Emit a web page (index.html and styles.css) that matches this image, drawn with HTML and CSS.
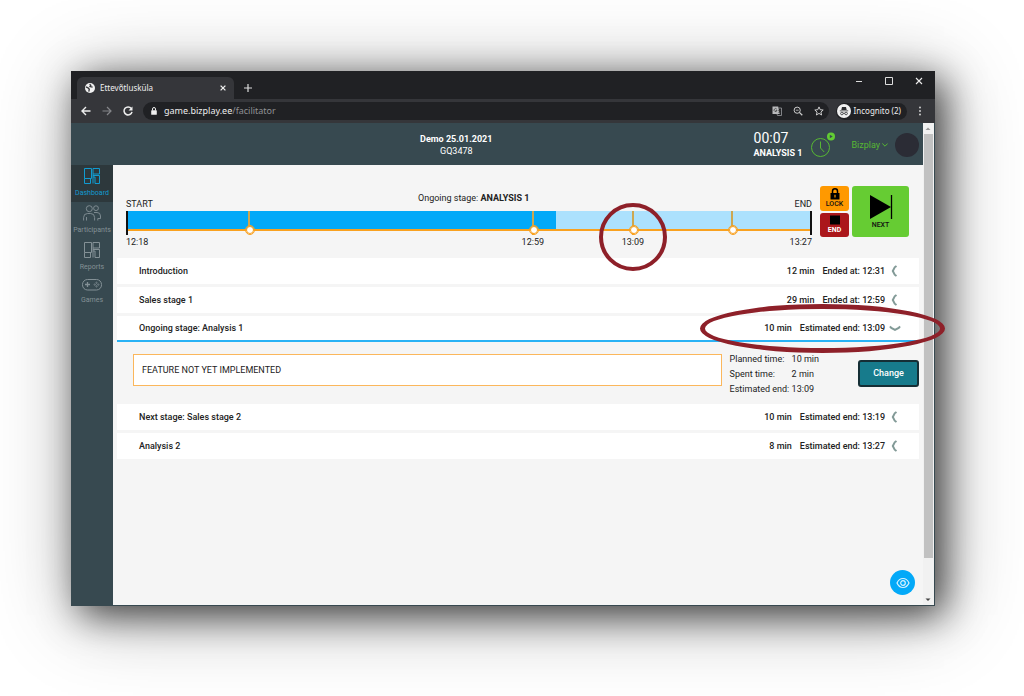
FILE: index.html
```html
<!DOCTYPE html>
<html lang="en">
<head>
<meta charset="utf-8">
<title>Ettevõtlusküla</title>
<link rel="stylesheet" href="styles.css">
</head>
<body>
<div class="window">
  <div class="tabstrip">
    <div class="tab">
      <svg class="i10" viewBox="0 0 10 10"><circle cx="5" cy="5" r="5" fill="#f1f1f1"/><path d="M1 3.800 3 4.800 4.300 6.200 3.800 8.600M4.600 1.200 5.800 2.400 5 3.600 7.600 4.200" fill="none" stroke="#35363a" stroke-width="1.300"/></svg>
      <span class="tab-title">Ettevõtlusküla</span>
      <button class="ghost" aria-label="Close tab"><svg class="i6" viewBox="0 0 6 6"><path d="M.6.6l4.800 4.800M5.400.6.6 5.400" stroke="#eee" stroke-width="1.300"/></svg></button>
    </div>
    <button class="ghost newtab" aria-label="New tab"><svg class="i8" viewBox="0 0 8 8"><path d="M4 0v8M0 4h8" stroke="#ddd" stroke-width="1.200"/></svg></button>
    <div class="win-controls">
      <button class="ghost" aria-label="Minimize"><svg class="i8" viewBox="0 0 8 8"><path d="M1 4.500h6" stroke="#ddd"/></svg></button>
      <button class="ghost" aria-label="Maximize"><svg class="i8" viewBox="0 0 8 8"><path d="M.5.500h7v7h-7z" fill="none" stroke="#ddd"/></svg></button>
      <button class="ghost" aria-label="Close"><svg class="i8" viewBox="0 0 8 8"><path d="M1 1l6 6M7 1 1 7" stroke="#eee" stroke-width="1.100"/></svg></button>
    </div>
  </div>
  <div class="toolbar">
    <button class="ghost" aria-label="Back"><svg class="i10" viewBox="0 0 10 10"><path d="M9.500 5H1.200M5 1 1 5l4 4" fill="none" stroke="#eee" stroke-width="1.400"/></svg></button>
    <button class="ghost" aria-label="Forward"><svg class="i10" viewBox="0 0 10 10"><path d="M.5 5h8.300M5 1l4 4-4 4" fill="none" stroke="#85868a" stroke-width="1.200"/></svg></button>
    <button class="ghost" aria-label="Reload"><svg class="i10" viewBox="0 0 10 10"><path d="M8.300 2.500A4 4 0 1 0 9 5.800" fill="none" stroke="#eee" stroke-width="1.500"/><path d="M9.500.5v4h-4z" fill="#eee"/></svg></button>
    <div class="address">
      <svg class="i8" viewBox="0 0 8 8"><rect x="1.200" y="3.200" width="5.600" height="4.600" rx=".6" fill="#eee"/><path d="M2.500 3.500V2a1.500 1.500 0 0 1 3 0v1.500" fill="none" stroke="#eee"/></svg>
      <span class="url">game.bizplay.ee<span class="path">/facilitator</span></span>
      <button class="ghost" aria-label="Translate"><svg class="i10" viewBox="0 0 10 10"><path d="M.5.500h5.700l1.500 7.500H.5z" fill="#b9babc"/><path d="M6.500 2h3v7.500h-4L5 8" fill="none" stroke="#9b9c9f" stroke-width=".8"/><path d="M4.800 3.200a1.500 1.500 0 1 0 .2 1.300H3.600M6.300 4.500h2.600M7.600 4v.8L6.800 7M7 5.300l1.600 1.500" fill="none" stroke="#333" stroke-width=".7"/></svg></button>
      <button class="ghost" aria-label="Zoom"><svg class="i10" viewBox="0 0 10 10"><circle cx="4.200" cy="4.200" r="3.100" fill="none" stroke="#ccc"/><path d="M6.400 6.400 9.300 9.300" stroke="#ccc" stroke-width="1.300"/><path d="M2.800 4.200h2.800" stroke="#ccc" stroke-width=".8"/></svg></button>
      <button class="ghost" aria-label="Bookmark"><svg class="i10" viewBox="0 0 10 10"><path d="M5 .9l1.200 2.800 3 .3-2.300 2 .7 3L5 7.400 2.400 9l.7-3L.8 4l3-.3z" fill="none" stroke="#ddd" stroke-width=".9"/></svg></button>
    </div>
    <div class="incognito">
      <svg class="i14" viewBox="0 0 14 14"><circle cx="7" cy="7" r="7" fill="#f1f1f1"/><path d="M4.300 6 5 3h4l.7 3zM2.800 6.400h8.400v.9H2.800z" fill="#2b2c2f"/><g fill="none" stroke="#2b2c2f" stroke-width=".8"><circle cx="4.900" cy="9.500" r="1.300"/><circle cx="9.100" cy="9.500" r="1.300"/><path d="M6.200 9.300h1.600"/></g></svg>
      <span>Incognito (2)</span>
    </div>
    <button class="ghost" aria-label="Menu"><svg class="i10" viewBox="0 0 10 10"><g fill="#ddd"><circle cx="5" cy="1.500" r=".9"/><circle cx="5" cy="5" r=".9"/><circle cx="5" cy="8.500" r=".9"/></g></svg></button>
  </div>

  <div class="viewport">
    <div class="app">
      <header class="header">
        <div class="event"><strong>Demo 25.01.2021</strong><span>GQ3478</span></div>
        <div class="session">
          <div class="clock"><span class="clock-time">00:07</span><strong>ANALYSIS 1</strong></div>
          <svg class="clock-icon" viewBox="0 0 26 26"><g fill="none" stroke="#57b833"><circle cx="10.500" cy="15.500" r="9"/><path d="M10.500 9.500V16l3.700 4"/></g><circle cx="21" cy="4.500" r="4" fill="#62cc33"/><path d="M19.800 2.800v3.400l2.900-1.700z" fill="#374950"/></svg>
          <button class="account">Bizplay <svg class="i6" viewBox="0 0 6 6"><path d="M.3 1.500 3 4.200l2.700-2.700" fill="none" stroke="#57b833"/></svg></button>
          <span class="avatar"></span>
        </div>
      </header>
      <div class="body">
        <nav class="sidebar">
          <a href="#" class="nav-item active"><svg class="i16" viewBox="0 0 16 16"><path d="M.5.500h7v10h-7zM.5 10.500v5h6v-5M9 .5h6.500V6H9zM9 6v9.500M9 7.500h6.500v8H11V9H9" fill="none" stroke="currentColor"/></svg>Dashboard</a>
          <a href="#" class="nav-item"><svg class="i18" viewBox="0 0 18 16"><g fill="none" stroke="currentColor" stroke-width=".9"><circle cx="6.300" cy="3.700" r="3"/><circle cx="13" cy="3.200" r="2.400"/><path d="M.6 15.500v-3q0-4 4-4h3q4 0 4 4v3M3.500 12v3.500M11 7.500h3q3.500 0 3.500 3.500v2.500h-2.700v2"/></g></svg>Participants</a>
          <a href="#" class="nav-item"><svg class="i16" viewBox="0 0 16 16"><path d="M.5.500h7v10h-7zM.5 10.500v5h6v-5M9 .5h6.500V6H9zM9 6v9.500M9 7.500h6.500v8H11V9H9" fill="none" stroke="currentColor"/></svg>Reports</a>
          <a href="#" class="nav-item short"><svg class="i20" viewBox="0 0 20 12"><rect x=".5" y=".5" width="19" height="10.500" rx="5" fill="none" stroke="currentColor"/><path d="M5.500 3v5M3 5.500h5" stroke="currentColor" stroke-width="1.300"/><g fill="none" stroke="currentColor" stroke-width=".7"><circle cx="14.500" cy="3.800" r=".7"/><circle cx="14.500" cy="7.400" r=".7"/><circle cx="12.700" cy="5.600" r=".7"/><circle cx="16.300" cy="5.600" r=".7"/></g></svg>Games</a>
        </nav>
        <main class="main">
          <section class="overview">
            <div class="timeline">
              <div class="captions"><span>START</span><span class="current">Ongoing stage: <strong>ANALYSIS 1</strong></span><span>END</span></div>
              <div class="track">
                <div class="progress" style="width:62.700%"></div>
                <span class="mark" style="left:17.900%"></span>
                <span class="mark tick" style="left:59.300%"><span class="mark-time">12:59</span></span>
                <span class="mark tick" style="left:73.900%"><span class="mark-time">13:09</span><span class="highlight-circle"></span></span>
                <span class="mark" style="left:88.400%"></span>
              </div>
              <div class="limits"><span>12:18</span><span>13:27</span></div>
            </div>
            <div class="controls">
              <div class="stack">
                <button class="action lock"><svg class="lock-icon" viewBox="0 0 12 12"><path d="M1.500 5h9v6.500h-9z"/><path d="M3.500 5V3.300a2.500 2.500 0 0 1 5 0V5" fill="none" stroke="#000" stroke-width="1.500"/><path d="M6 6.800v2.800" stroke="#ff9900" stroke-width="1.200"/></svg>LOCK</button>
                <button class="action end"><svg class="end-icon" viewBox="0 0 10 10"><path d="M0 .5h10v9H0z"/></svg>END</button>
              </div>
              <button class="action next"><svg class="next-icon" viewBox="0 0 24 26"><path d="M1 1 22 13 1 25z"/><path d="M22.500 1v24" stroke="#000" stroke-width="1.300"/></svg>NEXT</button>
            </div>
          </section>
          <section class="stages">
            <button class="stage"><span>Introduction</span><span class="length">12 min</span><span>Ended at: 12:31</span><svg class="chev" viewBox="0 0 12 12"><path d="M7.500 1 5.700 2.300 3.800 6l1.900 3.700L7.500 11" /></svg></button>
            <button class="stage"><span>Sales stage 1</span><span class="length">29 min</span><span>Ended at: 12:59</span><svg class="chev" viewBox="0 0 12 12"><path d="M7.500 1 5.700 2.300 3.800 6l1.900 3.700L7.500 11" /></svg></button>
            <div class="open-stage">
              <button class="stage open" aria-expanded="true"><span>Ongoing stage: Analysis 1</span><span class="length">10 min</span><span>Estimated end: 13:09</span><svg class="chev" viewBox="0 0 12 12"><path d="M1 4.300 2.300 6 6 7.900 9.700 6 11 4.300"/></svg></button>
              <span class="highlight-ellipse"></span>
              <div class="detail">
                <div class="notice">FEATURE NOT YET IMPLEMENTED</div>
                <dl class="times"><dt>Planned time:</dt><dd>10 min</dd><dt>Spent time:</dt><dd>2 min</dd><dt>Estimated end:</dt><dd>13:09</dd></dl>
                <button class="change">Change</button>
              </div>
            </div>
            <button class="stage"><span>Next stage: Sales stage 2</span><span class="length">10 min</span><span>Estimated end: 13:19</span><svg class="chev" viewBox="0 0 12 12"><path d="M7.500 1 5.700 2.300 3.800 6l1.900 3.700L7.500 11" /></svg></button>
            <button class="stage"><span>Analysis 2</span><span class="length">8 min</span><span>Estimated end: 13:27</span><svg class="chev" viewBox="0 0 12 12"><path d="M7.500 1 5.700 2.300 3.800 6l1.900 3.700L7.500 11" /></svg></button>
          </section>
          <button class="watch" aria-label="Watch"><svg class="i14" viewBox="0 0 14 14"><g fill="none" stroke="#d9f2ff" stroke-width="1.200"><path d="M1 7q2-4.500 6-4.500T13 7q-2 4.500-6 4.500T1 7z"/><circle cx="7" cy="7" r="2.300"/></g></svg></button>
        </main>
      </div>
    </div>
    <div class="scrollbar">
      <svg class="arrow" viewBox="0 0 10 10"><path d="M2.500 6.500 5 4l2.500 2.500z" fill="#999"/></svg>
      <span class="thumb"></span>
      <svg class="arrow" viewBox="0 0 10 10"><path d="M2.500 4 5 6.500 7.500 4z" fill="#444"/></svg>
    </div>
  </div>
</div>
</body>
</html>
```
FILE: styles.css
```css
* { box-sizing: border-box; }
body { margin: 0; min-height: 100vh; padding: 71px 89px 90px 71px; display: flex; background: #fff; font: 9px/15px Roboto, sans-serif; color: #222; }
button { font: inherit; color: inherit; border: 0; padding: 0; background: none; cursor: pointer; }
svg { display: block; flex: none; }
.ghost { display: flex; }
.i6 { width: 6px; height: 6px; }
.i8 { width: 8px; height: 8px; }
.i10 { width: 10px; height: 10px; }
.i14 { width: 14px; height: 14px; }
.i16 { width: 16px; height: 16px; }
.i18 { width: 18px; height: 16px; }
.i20 { width: 20px; height: 12px; }

.window { flex: 1; min-width: 0; display: flex; flex-direction: column; background: #35363a; box-shadow: 9px 9px 36px rgba(0,0,0,.7), 6px 8px 80px rgba(0,0,0,.3); }
.tabstrip { display: flex; height: 28px; padding-left: 6px; background: #202124; color: #eee; font: 8px/12px "Noto Sans", sans-serif; }
.tab { display: flex; align-items: center; gap: 5px; width: 157px; margin-top: 6px; padding: 0 8px; border-radius: 6px 6px 0 0; background: #35363a; }
.tab-title { flex: 1; }
.newtab { align-items: center; margin: 6px 0 0 10px; }
.win-controls { display: flex; gap: 22px; margin-left: auto; padding: 6px 12px 0 0; }
.toolbar { display: flex; align-items: center; gap: 11px; height: 24px; padding: 0 10px; background: #35363a; color: #eee; font: 8px/12px "Noto Sans", sans-serif; }
.address { flex: 1; display: flex; align-items: center; gap: 11px; height: 18px; margin-left: -1px; padding: 0 5px 0 7px; border-radius: 9px; background: #202124; }
.url { flex: 1; font-size: 9px; margin-left: -5px; }
.path { color: #909194; }
.incognito { display: flex; align-items: center; gap: 3px; height: 17px; padding: 0 6px 0 1px; margin-left: -4px; margin-right: -3px; border-radius: 9px; background: #202124; }

.viewport { flex: 1; display: flex; border: solid #374950; border-width: 0 1px 1px 0; }
.app { flex: 1; min-width: 0; display: flex; flex-direction: column; background: #f5f5f5; }
.header { display: flex; align-items: center; height: 42px; padding: 2px 4px 0 88px; background: #374950; color: #fff; line-height: 12px; }
.event { flex: 1; display: flex; flex-direction: column; align-items: center; }
.session { display: flex; align-items: center; }
.clock { display: flex; flex-direction: column; line-height: 14px; }
.clock-time { font-size: 14px; line-height: 16px; }
.clock-icon { width: 26px; height: 26px; margin: 0 15px 0 8px; }
.account { display: flex; align-items: center; gap: 2px; color: #57b833; }
.avatar { width: 24px; height: 24px; margin-left: 7px; border-radius: 50%; background: #2b2c35; }
.body { flex: 1; display: flex; }
.sidebar { width: 42px; background: #374950; }
.nav-item { display: flex; flex-direction: column; align-items: center; justify-content: space-between; height: 37px; padding: 3px 0 4px; color: #849196; font-size: 7px; line-height: 10px; text-decoration: none; }
.nav-item.active { background: #2d383c; color: #119bd0; }
.nav-item.short { height: 33px; }

.main { flex: 1; min-width: 0; display: flex; flex-direction: column; padding: 21px 4px 10px; }
.overview { display: flex; gap: 8px; padding: 0 10px 0 9px; }
.timeline { flex: 1; padding-top: 5px; }
.captions { display: flex; justify-content: space-between; align-items: flex-end; height: 20px; line-height: 13px; }
.captions .current { align-self: flex-start; line-height: 15px; }
.track { position: relative; height: 20px; background: #ace1fd; border-bottom: 2px solid #f9a11f; }
.track::before, .track::after { content: ""; position: absolute; top: 0; left: 0; width: 2px; height: 24px; background: #111; }
.track::after { left: auto; right: 0; }
.progress { height: 100%; background: #03a9f8; }
.mark { position: absolute; top: 0; width: 2px; height: 18px; margin-left: -1px; background: #cda751; }
.mark::before { content: ""; position: absolute; top: 15px; left: -2px; width: 6px; height: 6px; border: 1px solid #f9a11f; outline: 1px solid #f9a11f; border-radius: 50%; background: #fff; }
.tick::after { content: ""; position: absolute; top: 22px; left: 0; width: 2px; height: 2px; background: #f9a11f; }
.mark-time { position: absolute; top: 24px; left: 1px; transform: translateX(-50%); }
.limits { display: flex; justify-content: space-between; padding-top: 4px; }
.highlight-circle { position: absolute; z-index: 2; top: -8px; left: -33px; width: 68px; height: 68px; border: 4px solid #8e2029; border-radius: 50%; }
.controls { display: flex; gap: 3px; height: 51px; }
.stack { display: flex; flex-direction: column; gap: 2px; width: 29px; }
.action { display: flex; flex-direction: column; align-items: center; justify-content: center; border-radius: 3px; color: #111; font-size: 7px; font-weight: 500; line-height: 8px; }
.stack .action { flex: 1; }
.lock { background: #ff9900; }
.stack .end { background: #ab171b; color: #fff; font-weight: 700; }
.end-icon { width: 10px; height: 10px; margin-bottom: 1px; }
.end-icon path { fill: #000; }
.lock-icon { width: 12px; height: 12px; }
.next { width: 57px; background: #66cc33; }
.next-icon { width: 24px; height: 26px; margin-bottom: 1px; }

.stages { display: flex; flex-direction: column; gap: 3px; margin-top: 8px; font-weight: 500; }
.stage { display: flex; align-items: center; width: 100%; height: 26px; padding: 0 18px 0 22px; background: #fff; color: #222; text-align: left; }
.stage.open { border-bottom: 2px solid #29b2f5; }
.length { margin: 0 8px 0 auto; }
.chev { width: 12px; height: 12px; margin-left: 4px; fill: none; stroke: #829a97; stroke-width: 2; }
.open-stage { position: relative; }
.highlight-ellipse { position: absolute; z-index: 2; top: -12px; right: -26px; width: 245px; height: 49px; border: 5px solid #8e2029; border-radius: 50%; }
.detail { display: flex; align-items: center; height: 59px; padding-left: 16px; font-weight: 400; }
.notice { flex: 1; height: 32px; margin-bottom: 4px; padding: 0 8px; border: 1px solid #fbb75c; background: #fff; line-height: 30px; }
.times { display: grid; grid-template-columns: 54px auto; column-gap: 8px; margin: 6px 0 0 8px; }
.times dt, .times dd { margin: 0; white-space: nowrap; }
.change { width: 61px; height: 27px; margin: 4px 0 0 39px; border: 2px solid #152e35; border-radius: 3px; background: #177b8c; color: #fff; font-weight: 500; }
.watch { display: flex; align-items: center; justify-content: center; align-self: flex-end; width: 25px; height: 25px; margin: auto 4px 0 0; border-radius: 50%; background: #03a9f8; }

.scrollbar { width: 11px; display: flex; flex-direction: column; background: #f1f1f1; }
.arrow { width: 10px; height: 11px; }
.thumb { height: 424px; margin: 0 1px auto; background: #c1c1c1; }
```
